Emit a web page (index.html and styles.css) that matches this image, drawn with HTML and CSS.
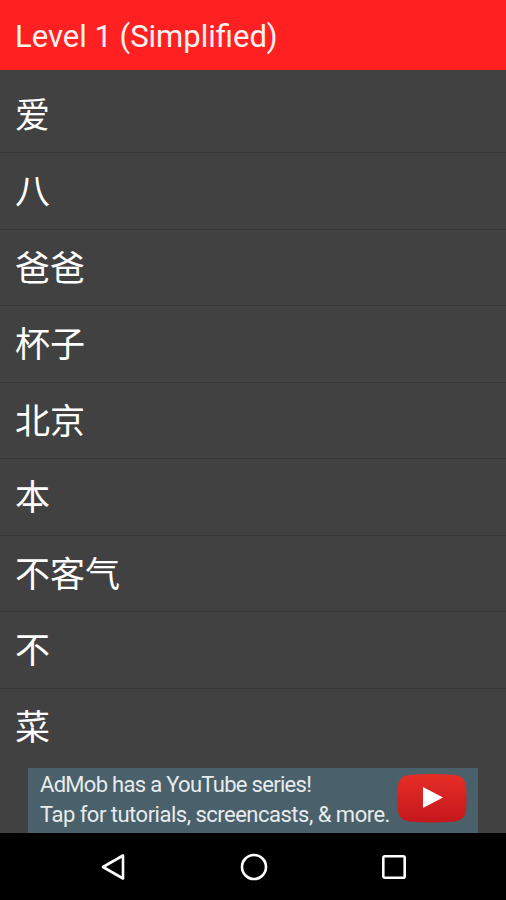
FILE: index.html
```html
<!DOCTYPE html>
<html>
<head>
	<meta charset="utf-8">
	<meta name="viewport" content="width=device-width, initial-scale=1">
	<title>Level 1 (Simplified)</title>
	<link rel="stylesheet" href="styles.css">
</head>
<body>
	<div class="screen">
		<div class="header">Level 1 (Simplified)</div>

		<div class="list">
			<div class="row">爱</div>
			<div class="row">八</div>
			<div class="row">爸爸</div>
			<div class="row">杯子</div>
			<div class="row">北京</div>
			<div class="row">本</div>
			<div class="row">不客气</div>
			<div class="row">不</div>
			<div class="row">菜</div>
		</div>

		<div class="ad">
			<div class="ad-text">
				<div class="ad-title">AdMob has a YouTube series!</div>
				<div>Tap for tutorials, screencasts, &amp; more.</div>
			</div>
			<svg class="ad-logo" width="70" height="49" viewBox="0 0 70 49">
				<defs>
					<linearGradient id="ytRed" x1="0" y1="0" x2="0" y2="1">
						<stop offset="0" stop-color="#e62d26"/>
						<stop offset="1" stop-color="#c4171c"/>
					</linearGradient>
				</defs>
				<path d="M12 1 Q35 -1 58 1 Q68 2 69 12 Q70 24 69 37 Q68 46 58 47.500 Q35 49.500 12 47.500 Q2 46 1 37 Q0 24 1 12 Q2 2 12 1 Z" fill="url(#ytRed)"/>
				<path d="M26 13 L46 23.500 L26 34 Z" fill="#fff"/>
			</svg>
		</div>

		<div class="navbar">
			<svg width="26" height="28" viewBox="0 0 26 28">
				<path d="M23 2.500 L3 14 L23 25.500 Z" fill="none" stroke="#fff" stroke-width="2.600" stroke-linejoin="round"/>
			</svg>
			<svg width="28" height="28" viewBox="0 0 28 28">
				<circle cx="14" cy="14" r="12" fill="none" stroke="#fff" stroke-width="2.600"/>
			</svg>
			<svg width="26" height="26" viewBox="0 0 26 26">
				<rect x="2.300" y="2.300" width="21.400" height="21.400" rx="1.500" fill="none" stroke="#fff" stroke-width="2.600"/>
			</svg>
		</div>
	</div>
</body>
</html>
```

FILE: styles.css
```css
html, body {
  margin: 0;
  padding: 0;
}

.screen {
  width: 506px;
  height: 900px;
  display: flex;
  flex-direction: column;
  background-color: #414141;
  overflow: hidden;
}

.header {
  height: 70px;
  line-height: 74px;
  flex-shrink: 0;
  padding-left: 15px;
  background-color: #ff2121;
  color: #fdf3f0;
  font-family: Roboto, sans-serif;
  font-size: 31px;
}

.list {
  flex: 1;
  min-height: 0;
  padding-top: 6.5px;
}

.row {
  height: 75.5px;
  line-height: 79px;
  padding-left: 15px;
  border-bottom: 1px solid #363636;
  color: #fff;
  font-family: Roboto, "Noto Sans CJK SC", sans-serif;
  font-size: 35px;
  overflow: hidden;
}

.row:last-child {
  height: 69px;
  border-bottom: none;
}

.ad {
  width: 450px;
  height: 65px;
  margin: 0 auto;
  flex-shrink: 0;
  display: flex;
  justify-content: space-between;
  align-items: center;
  box-sizing: border-box;
  padding: 0 11px 5px 12px;
  background-color: #4a606b;
}

.ad-text {
  margin-top: 4px;
  color: #e8eced;
  font-family: Roboto, sans-serif;
  font-size: 22px;
  letter-spacing: -0.5px;
  line-height: 30px;
  white-space: nowrap;
}

.ad-title {
  letter-spacing: -0.7px;
}

.ad-logo {
  flex-shrink: 0;
}

.navbar {
  height: 67px;
  flex-shrink: 0;
  display: flex;
  justify-content: space-between;
  align-items: center;
  padding: 0 99px 0 100px;
  background-color: #000;
}
```
